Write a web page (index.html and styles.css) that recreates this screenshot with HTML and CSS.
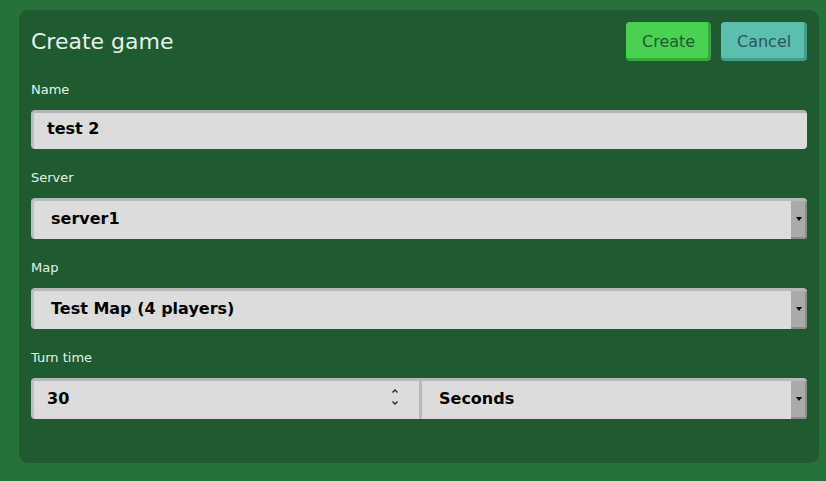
FILE: index.html
```html
<!DOCTYPE html>
<html lang="en">
<head>
<meta charset="utf-8">
<title>Create game</title>
<link rel="stylesheet" href="styles.css">
</head>
<body>
<div class="panel">
  <div class="header">
    <h1 class="title">Create game</h1>
    <div class="actions">
      <button class="btn btn-create">Create</button>
      <button class="btn btn-cancel">Cancel</button>
    </div>
  </div>

  <div class="group">
    <div class="label">Name</div>
    <div class="input">test 2</div>
  </div>

  <div class="group">
    <div class="label">Server</div>
    <div class="select">
      <span class="select-text">server1</span>
      <span class="arrow-box"><span class="arrow"></span></span>
    </div>
  </div>

  <div class="group">
    <div class="label">Map</div>
    <div class="select">
      <span class="select-text">Test Map (4 players)</span>
      <span class="arrow-box"><span class="arrow"></span></span>
    </div>
  </div>

  <div class="group">
    <div class="label">Turn time</div>
    <div class="combo">
      <div class="number">
        <span class="number-text">30</span>
        <svg class="spinner" width="8" height="20" viewBox="0 0 8 20">
          <path d="M1.5 5.5 L4 3 L6.5 5.5" fill="none" stroke="#222" stroke-width="1.3"/>
          <path d="M1.5 14.5 L4 17 L6.5 14.5" fill="none" stroke="#222" stroke-width="1.3"/>
        </svg>
      </div>
      <div class="select select-unit">
        <span class="select-text">Seconds</span>
        <span class="arrow-box"><span class="arrow"></span></span>
      </div>
    </div>
  </div>
</div>
</body>
</html>
```

FILE: styles.css
```css
* { box-sizing: border-box; }

html, body {
  margin: 0;
  padding: 0;
}

body {
  background: #27713a;
  font-family: "DejaVu Sans", Verdana, sans-serif;
  padding: 10px 7px 0 19px;
}

.panel {
  width: 800px;
  background: #1f5a30;
  border-radius: 9px;
  padding: 12px 12px 44px 12px;
}

.header {
  display: flex;
  align-items: center;
  justify-content: space-between;
  height: 39px;
}

.title {
  margin: 0;
  font-size: 22px;
  font-weight: normal;
  color: #e6f2ec;
  line-height: 26px;
}

.actions {
  display: flex;
  gap: 10px;
}

.btn {
  font-family: "DejaVu Sans", Verdana, sans-serif;
  font-size: 16px;
  height: 39px;
  padding: 4px 14px 0 16px;
  line-height: 32px;
  border: none;
  border-radius: 4px;
  border-right: 3px solid;
  border-bottom: 3px solid;
  margin: 0;
}

.btn-create {
  background: #49d151;
  border-color: #36a93e;
  color: #1f5a30;
  width: 85px;
}

.btn-cancel {
  background: #5bbfae;
  border-color: #459d8e;
  color: #2a5858;
  width: 86px;
}

.group {
  margin-top: 21px;
}

.label {
  font-size: 13px;
  line-height: 16px;
  color: #e2f4ee;
  margin-bottom: 12px;
}

.input {
  height: 39px;
  background: #dcdcdc;
  border-top: 3px solid #b5b5b5;
  border-left: 3px solid #bdbdbd;
  border-radius: 4px;
  padding: 6px 13px 10px 13px;
  font-size: 16px;
  line-height: 20px;
  font-weight: bold;
  color: #000;
}

.select {
  display: flex;
  height: 41px;
  background: #dcdcdc;
  border-top: 3px solid #b9b9b9;
  border-left: 3px solid #c0c0c0;
  border-radius: 4px;
  font-size: 16px;
  font-weight: bold;
  color: #000;
  overflow: hidden;
}

.select-text {
  flex: 1;
  padding: 8px 0 0 17px;
  line-height: 20px;
}

.arrow-box {
  width: 16px;
  background: #aaaaaa;
  border-right: 2px solid #8c8c8c;
  border-bottom: 2px solid #8c8c8c;
  display: flex;
  align-items: center;
  justify-content: center;
  padding-left: 1px;
}

.arrow {
  width: 0;
  height: 0;
  border-left: 3px solid transparent;
  border-right: 3px solid transparent;
  border-top: 4px solid #000;
}

.combo {
  display: flex;
  height: 41px;
}

.number {
  width: 388px;
  display: flex;
  align-items: flex-start;
  background: #dcdcdc;
  border-top: 3px solid #b9b9b9;
  border-left: 3px solid #c0c0c0;
  border-radius: 4px 0 0 4px;
  font-size: 16px;
  font-weight: bold;
  color: #000;
}

.number-text {
  flex: 1;
  padding: 8px 0 0 13px;
  line-height: 20px;
}

.spinner {
  margin: 6px 20px 0 0;
}

.select-unit {
  flex: 1;
  border-radius: 0 4px 4px 0;
  border-left: 3px solid #b9b9b9;
}
```
